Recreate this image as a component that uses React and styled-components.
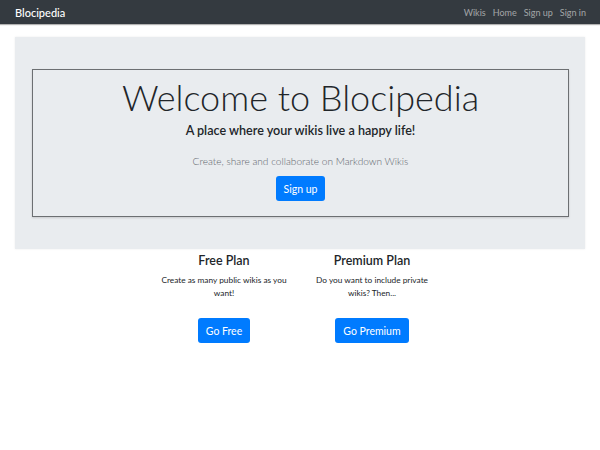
import React from "react";
import styled, { createGlobalStyle } from "styled-components";

const GlobalStyle = createGlobalStyle`
  body {
    margin: 0;
    background: #fff;
    font-family: Lato, "Open Sans", sans-serif;
    color: #212529;
  }
`;

const plans = [
  {
    title: "Free Plan",
    text: "Create as many public wikis as you want!",
    button: "Go Free",
  },
  {
    title: "Premium Plan",
    text: "Do you want to include private wikis? Then...",
    button: "Go Premium",
  },
];

function App() {
  return (
    <>
      <GlobalStyle />
      <NavBar>
        <Brand>Blocipedia</Brand>
        <NavLinks>
          <NavLink>Wikis</NavLink>
          <NavLink>Home</NavLink>
          <NavLink>Sign up</NavLink>
          <NavLink>Sign in</NavLink>
        </NavLinks>
      </NavBar>
      <Jumbotron>
        <WelcomeBox>
          <Title>Welcome to Blocipedia</Title>
          <Tagline>A place where your wikis live a happy life!</Tagline>
          <Lead>Create, share and collaborate on Markdown Wikis</Lead>
          <BlueButton>Sign up</BlueButton>
        </WelcomeBox>
      </Jumbotron>
      <Plans>
        {plans.map((plan) => (
          <Plan key={plan.title}>
            <PlanTitle>{plan.title}</PlanTitle>
            <PlanText>{plan.text}</PlanText>
            <BlueButton>{plan.button}</BlueButton>
          </Plan>
        ))}
      </Plans>
    </>
  );
}

export default App;

const NavBar = styled.nav`
  height: 24px;
  background: #343a40;
  display: flex;
  align-items: center;
  justify-content: space-between;
  padding: 0 14px 0 15px;
  box-shadow: 0 1px 1px rgba(0, 0, 0, 0.3);
`;

const Brand = styled.span`
  color: #fff;
  font-size: 11px;
  font-weight: 500;
`;

const NavLinks = styled.div`
  display: flex;
  gap: 7px;
`;

const NavLink = styled.span`
  color: rgba(255, 255, 255, 0.55);
  font-size: 9px;
`;

const Jumbotron = styled.div`
  margin: 13px 15px 0;
  height: 212px;
  background: #e9ecef;
  padding: 32px 16px 0 17px;
  box-sizing: border-box;
  box-shadow: 0 0 2px rgba(0, 0, 0, 0.08);
`;

const WelcomeBox = styled.div`
  height: 148px;
  border: 1px solid #6c6f72;
  box-sizing: border-box;
  box-shadow: 0 1px 2px rgba(0, 0, 0, 0.15);
  display: flex;
  flex-direction: column;
  align-items: center;
`;

const Title = styled.h1`
  margin: 2px 0 0;
  font-size: 36px;
  line-height: 50px;
  font-weight: 300;
  color: #212529;
`;

const Tagline = styled.h2`
  margin: 0;
  font-size: 12.6px;
  line-height: 18px;
  font-weight: 600;
  color: #212529;
`;

const Lead = styled.p`
  margin: 13px 0 0;
  font-size: 10.1px;
  line-height: 16px;
  font-weight: 300;
  color: #5f666d;
`;

const BlueButton = styled.button`
  margin-top: 7px;
  height: 25px;
  padding: 0 8px;
  border: none;
  border-radius: 3px;
  background: #007bff;
  color: #fff;
  font-family: inherit;
  font-size: 10.5px;
`;

const Plans = styled.div`
  display: flex;
  justify-content: center;
  gap: 10px;
  margin-left: -4px;
`;

const Plan = styled.div`
  width: 138px;
  display: flex;
  flex-direction: column;
  align-items: center;
  text-align: center;

  ${BlueButton} {
    margin-top: 18px;
  }
`;

const PlanTitle = styled.h3`
  margin: 3px 0 0;
  font-size: 12.5px;
  line-height: 18px;
  font-weight: 600;
`;

const PlanText = styled.p`
  margin: 4px 0 0;
  padding: 0 5px;
  font-size: 8.3px;
  line-height: 13px;
  color: #212529;
`;
